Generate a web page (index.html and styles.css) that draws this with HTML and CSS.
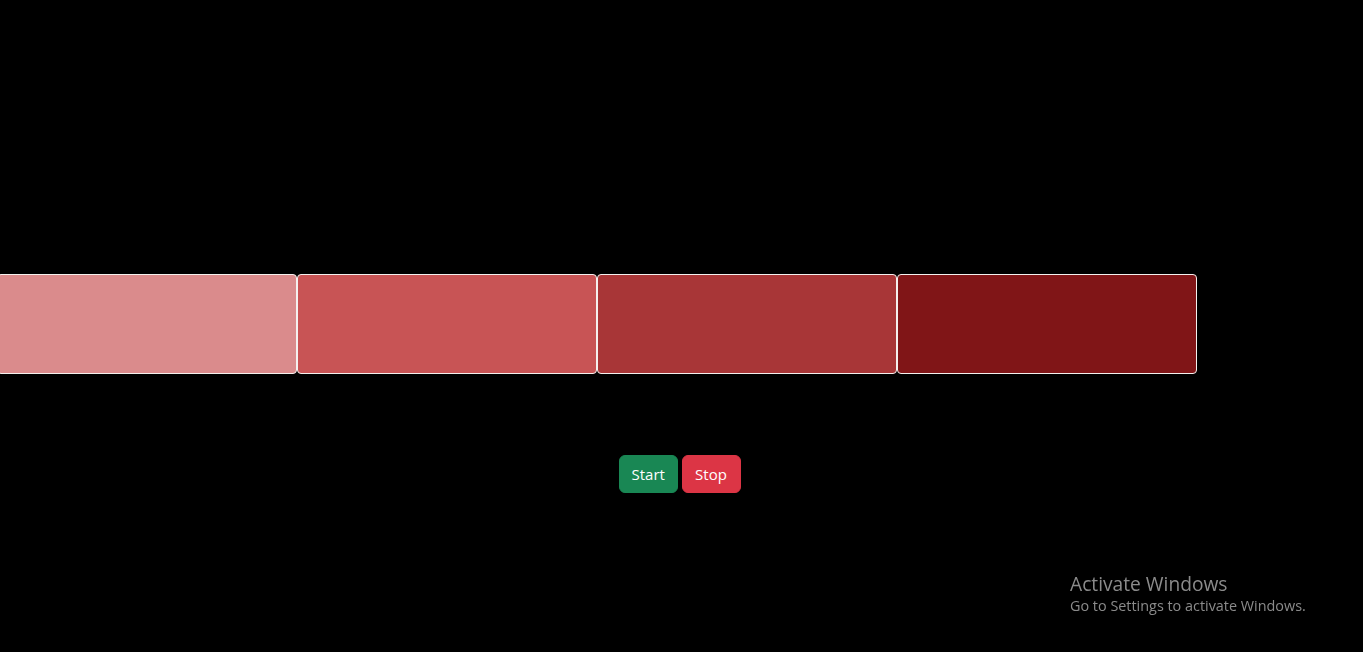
FILE: index.html
```html
<!DOCTYPE html>
<html>
<head>
<meta charset="utf-8">
<link rel="stylesheet" href="styles.css">
</head>
<body>
<div class="page">
  <div class="track">
    <div class="box box-1"></div>
    <div class="box box-2"></div>
    <div class="box box-3"></div>
    <div class="box box-4"></div>
  </div>
  <div class="controls">
    <button class="btn btn-start">Start</button>
    <button class="btn btn-stop">Stop</button>
  </div>
</div>
<div class="watermark">
  <div class="wm-title">Activate Windows</div>
  <div class="wm-sub">Go to Settings to activate Windows.</div>
</div>
</body>
</html>
```
FILE: styles.css
```css
html, body {
  margin: 0;
  padding: 0;
  background: #000;
  height: 100%;
  overflow: hidden;
  font-family: "Open Sans", "Noto Sans", "Liberation Sans", sans-serif;
}
.page {
  padding-top: 274px;
}
.track {
  display: flex;
  margin-left: -3px;
  height: 100px;
}
.box {
  width: 300px;
  height: 100px;
  box-sizing: border-box;
  border: 1px solid #f4f0ee;
  border-radius: 4px;
  flex: none;
}
.box-1 { background: #da8b8c; }
.box-2 { background: #c85455; }
.box-3 { background: #a83637; }
.box-4 { background: #801517; }
.controls {
  display: flex;
  justify-content: center;
  gap: 4px;
  margin-top: 81px;
  padding-right: 4px;
}
.btn {
  font-family: "Open Sans", "Noto Sans", sans-serif;
  font-size: 15px;
  line-height: 24px;
  padding: 6px 12px;
  border: 1px solid transparent;
  border-radius: 6px;
  color: #fff;
  height: 38px;
  box-sizing: border-box;
  width: 59px;
  cursor: pointer;
}
.btn-start { background: #198754; border-color: #198754; }
.btn-stop { background: #dc3545; border-color: #dc3545; }
.watermark {
  position: fixed;
  left: 1070px;
  top: 571px;
  color: #8b8b8b;
  font-family: "Open Sans", "Noto Sans", sans-serif;
}
.wm-title {
  font-size: 19.2px;
  line-height: 25px;
}
.wm-sub {
  font-size: 14.4px;
  line-height: 20px;
}
```
